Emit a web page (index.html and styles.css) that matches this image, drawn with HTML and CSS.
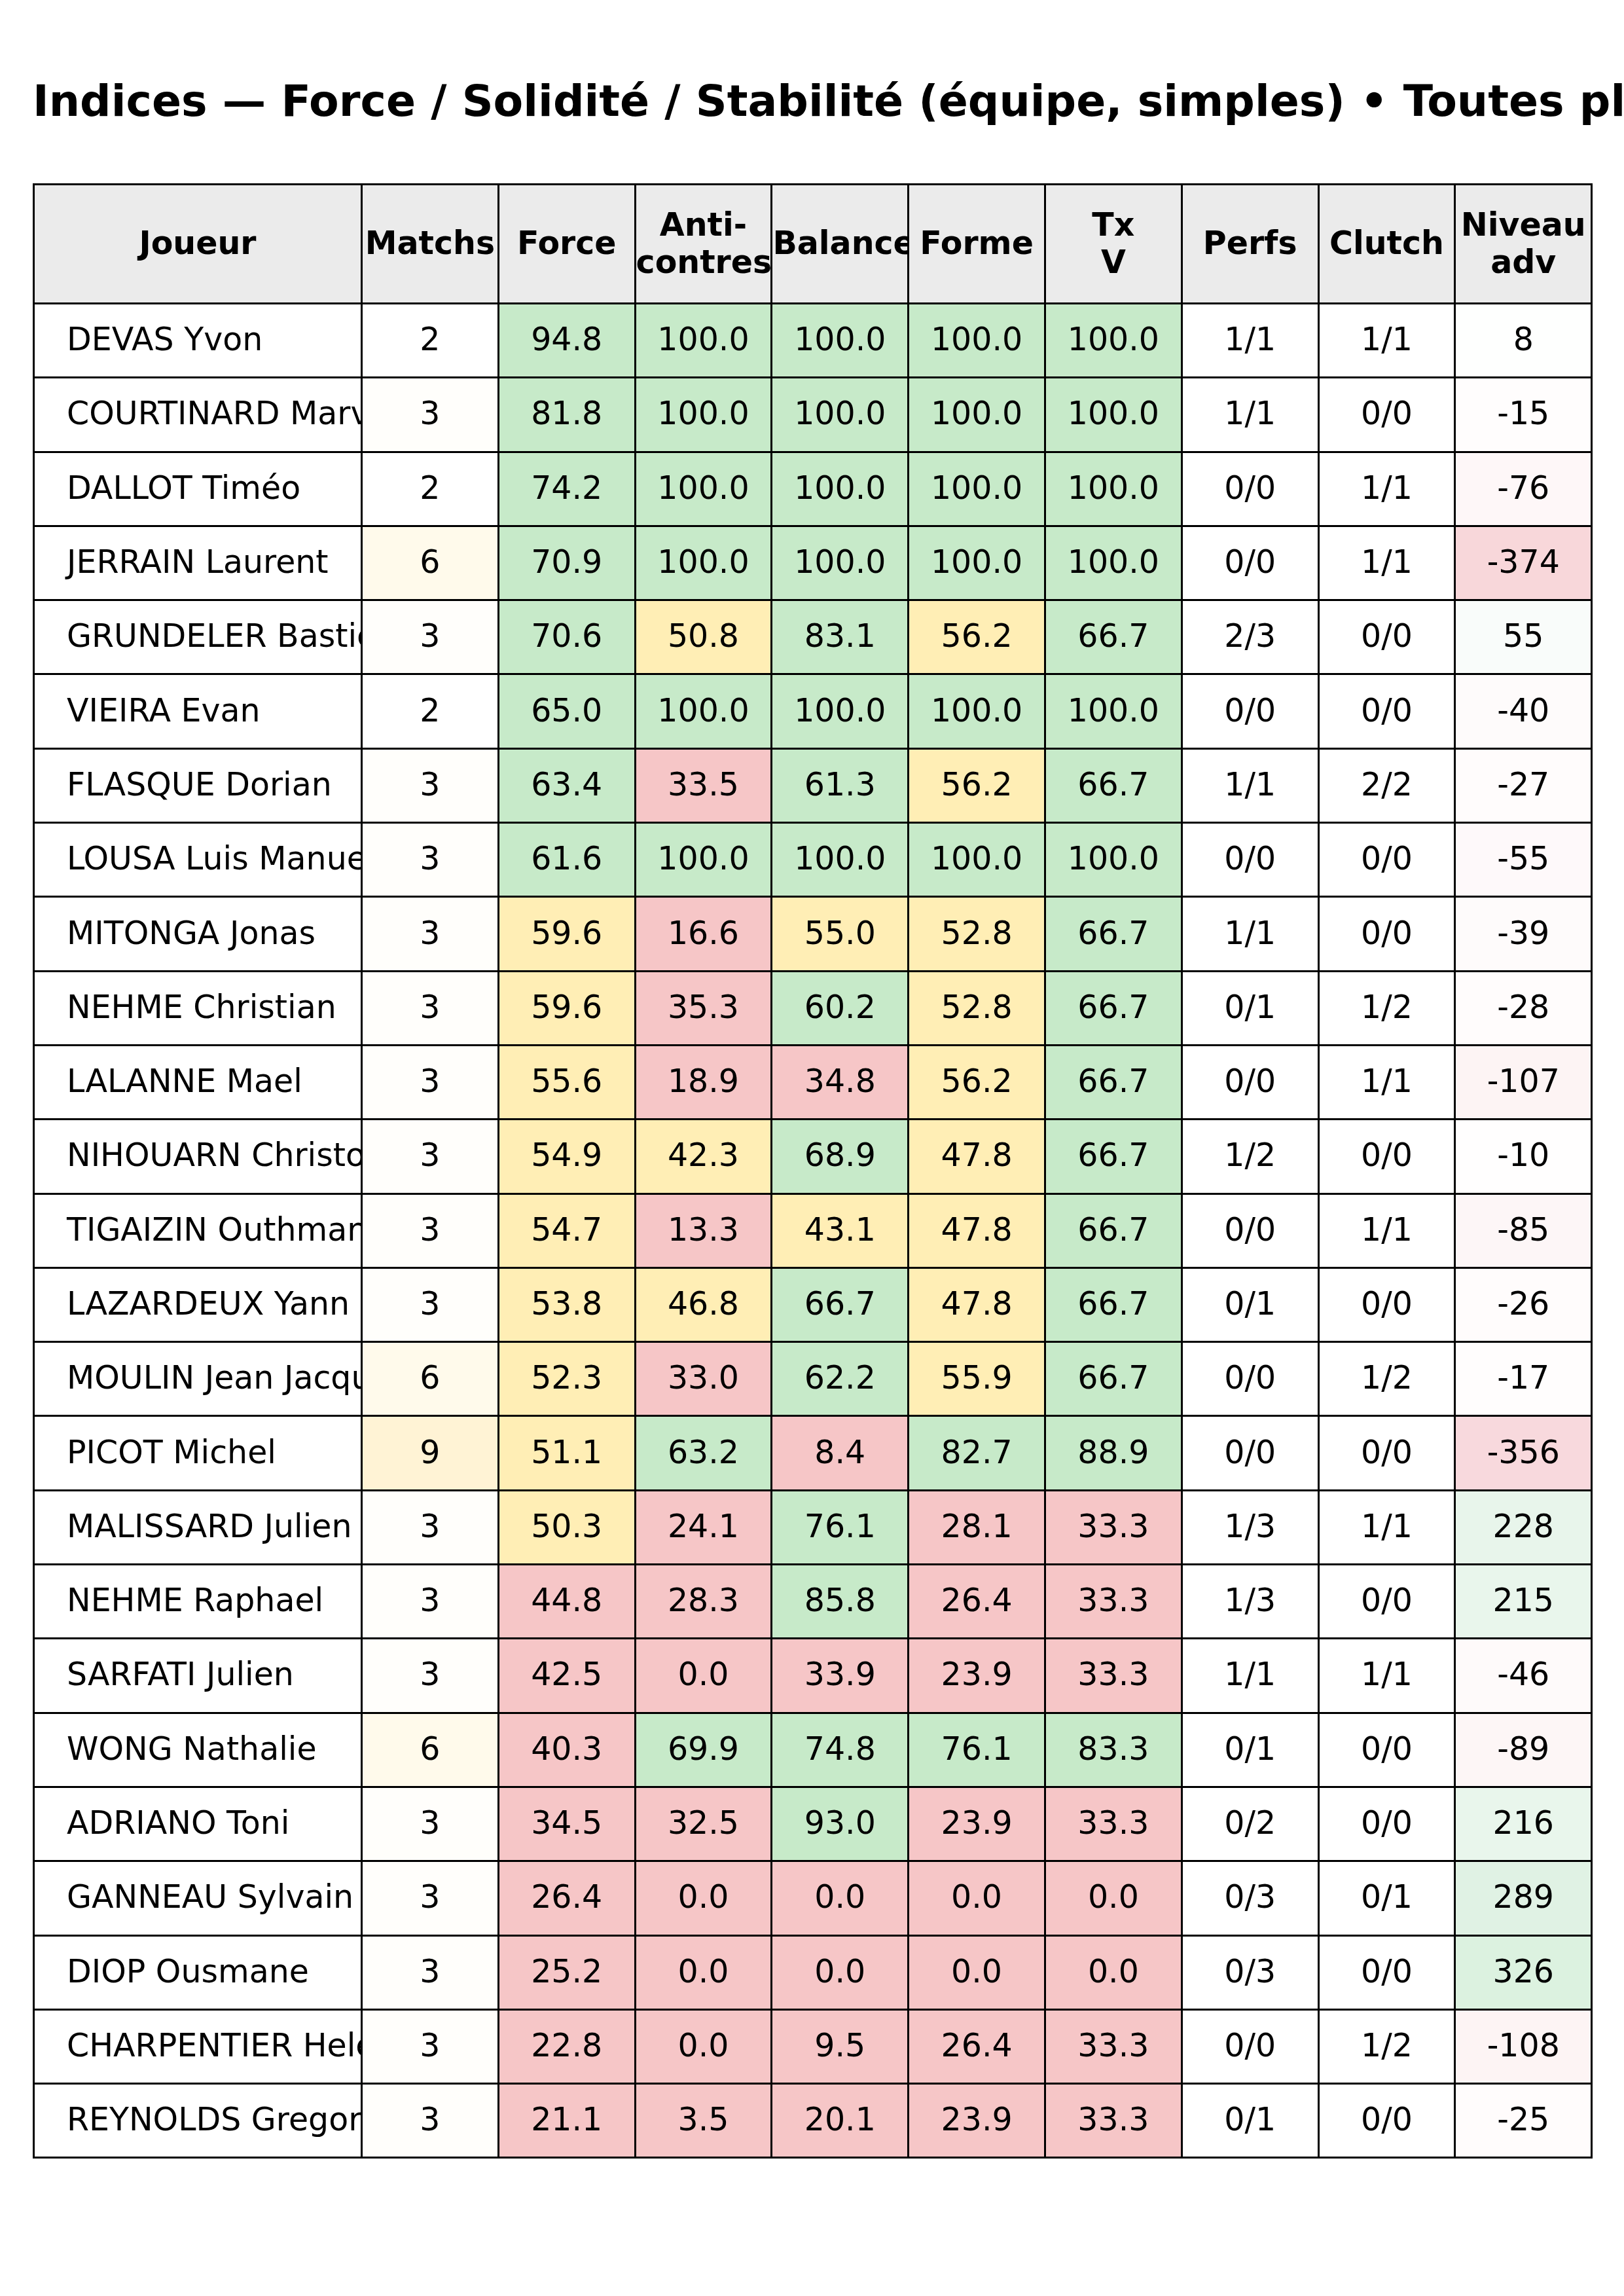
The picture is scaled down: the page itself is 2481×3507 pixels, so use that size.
FILE: index.html
```html
<!DOCTYPE html>
<html lang="fr">
<head>
<meta charset="utf-8">
<title>Indices</title>
<link rel="stylesheet" href="styles.css">
</head>
<body>
<div class="page">
  <h1 class="title">Indices — Force / Solidité / Stabilité (équipe, simples) • Toutes plages</h1>
  <table class="grid">
    <colgroup>
      <col class="c-name"><col class="c-num"><col class="c-num"><col class="c-num"><col class="c-num"><col class="c-num"><col class="c-num"><col class="c-num"><col class="c-num"><col class="c-num">
    </colgroup>
    <thead>
      <tr>
        <th>Joueur</th><th>Matchs</th><th>Force</th><th>Anti-<br>contres</th><th>Balance</th><th>Forme</th><th>Tx<br>V</th><th>Perfs</th><th>Clutch</th><th>Niveau<br>adv</th>
      </tr>
    </thead>
    <tbody>
      <tr><td class="name">DEVAS Yvon</td><td>2</td><td class="g">94.8</td><td class="g">100.0</td><td class="g">100.0</td><td class="g">100.0</td><td class="g">100.0</td><td>1/1</td><td>1/1</td><td style="background:#fefffe">8</td></tr>
      <tr><td class="name">COURTINARD Marvin</td><td style="background:#fffefb">3</td><td class="g">81.8</td><td class="g">100.0</td><td class="g">100.0</td><td class="g">100.0</td><td class="g">100.0</td><td>1/1</td><td>0/0</td><td style="background:#fffdfd">-15</td></tr>
      <tr><td class="name">DALLOT Timéo</td><td>2</td><td class="g">74.2</td><td class="g">100.0</td><td class="g">100.0</td><td class="g">100.0</td><td class="g">100.0</td><td>0/0</td><td>1/1</td><td style="background:#fef7f8">-76</td></tr>
      <tr><td class="name">JERRAIN Laurent</td><td style="background:#fffaeb">6</td><td class="g">70.9</td><td class="g">100.0</td><td class="g">100.0</td><td class="g">100.0</td><td class="g">100.0</td><td>0/0</td><td>1/1</td><td style="background:#f8d7da">-374</td></tr>
      <tr><td class="name">GRUNDELER Bastien</td><td style="background:#fffefb">3</td><td class="g">70.6</td><td class="y">50.8</td><td class="g">83.1</td><td class="y">56.2</td><td class="g">66.7</td><td>2/3</td><td>0/0</td><td style="background:#f9fcfa">55</td></tr>
      <tr><td class="name">VIEIRA Evan</td><td>2</td><td class="g">65.0</td><td class="g">100.0</td><td class="g">100.0</td><td class="g">100.0</td><td class="g">100.0</td><td>0/0</td><td>0/0</td><td style="background:#fefbfb">-40</td></tr>
      <tr><td class="name">FLASQUE Dorian</td><td style="background:#fffefb">3</td><td class="g">63.4</td><td class="r">33.5</td><td class="g">61.3</td><td class="y">56.2</td><td class="g">66.7</td><td>1/1</td><td>2/2</td><td style="background:#fffcfc">-27</td></tr>
      <tr><td class="name">LOUSA Luis Manuel</td><td style="background:#fffefb">3</td><td class="g">61.6</td><td class="g">100.0</td><td class="g">100.0</td><td class="g">100.0</td><td class="g">100.0</td><td>0/0</td><td>0/0</td><td style="background:#fef9fa">-55</td></tr>
      <tr><td class="name">MITONGA Jonas</td><td style="background:#fffefb">3</td><td class="y">59.6</td><td class="r">16.6</td><td class="y">55.0</td><td class="y">52.8</td><td class="g">66.7</td><td>1/1</td><td>0/0</td><td style="background:#fefbfb">-39</td></tr>
      <tr><td class="name">NEHME Christian</td><td style="background:#fffefb">3</td><td class="y">59.6</td><td class="r">35.3</td><td class="g">60.2</td><td class="y">52.8</td><td class="g">66.7</td><td>0/1</td><td>1/2</td><td style="background:#fffcfc">-28</td></tr>
      <tr><td class="name">LALANNE Mael</td><td style="background:#fffefb">3</td><td class="y">55.6</td><td class="r">18.9</td><td class="r">34.8</td><td class="y">56.2</td><td class="g">66.7</td><td>0/0</td><td>1/1</td><td style="background:#fdf4f4">-107</td></tr>
      <tr><td class="name">NIHOUARN Christophe</td><td style="background:#fffefb">3</td><td class="y">54.9</td><td class="y">42.3</td><td class="g">68.9</td><td class="y">47.8</td><td class="g">66.7</td><td>1/2</td><td>0/0</td><td style="background:#fffefe">-10</td></tr>
      <tr><td class="name">TIGAIZIN Outhmane</td><td style="background:#fffefb">3</td><td class="y">54.7</td><td class="r">13.3</td><td class="y">43.1</td><td class="y">47.8</td><td class="g">66.7</td><td>0/0</td><td>1/1</td><td style="background:#fdf6f7">-85</td></tr>
      <tr><td class="name">LAZARDEUX Yann</td><td style="background:#fffefb">3</td><td class="y">53.8</td><td class="y">46.8</td><td class="g">66.7</td><td class="y">47.8</td><td class="g">66.7</td><td>0/1</td><td>0/0</td><td style="background:#fffcfc">-26</td></tr>
      <tr><td class="name">MOULIN Jean Jacques</td><td style="background:#fffaeb">6</td><td class="y">52.3</td><td class="r">33.0</td><td class="g">62.2</td><td class="y">55.9</td><td class="g">66.7</td><td>0/0</td><td>1/2</td><td style="background:#fffdfd">-17</td></tr>
      <tr><td class="name">PICOT Michel</td><td style="background:#fff3d5">9</td><td class="y">51.1</td><td class="g">63.2</td><td class="r">8.4</td><td class="g">82.7</td><td class="g">88.9</td><td>0/0</td><td>0/0</td><td style="background:#f8d9dd">-356</td></tr>
      <tr><td class="name">MALISSARD Julien</td><td style="background:#fffefb">3</td><td class="y">50.3</td><td class="r">24.1</td><td class="g">76.1</td><td class="r">28.1</td><td class="r">33.3</td><td>1/3</td><td>1/1</td><td style="background:#e8f5eb">228</td></tr>
      <tr><td class="name">NEHME Raphael</td><td style="background:#fffefb">3</td><td class="r">44.8</td><td class="r">28.3</td><td class="g">85.8</td><td class="r">26.4</td><td class="r">33.3</td><td>1/3</td><td>0/0</td><td style="background:#e9f6ec">215</td></tr>
      <tr><td class="name">SARFATI Julien</td><td style="background:#fffefb">3</td><td class="r">42.5</td><td class="r">0.0</td><td class="r">33.9</td><td class="r">23.9</td><td class="r">33.3</td><td>1/1</td><td>1/1</td><td style="background:#fefafa">-46</td></tr>
      <tr><td class="name">WONG Nathalie</td><td style="background:#fffaeb">6</td><td class="r">40.3</td><td class="g">69.9</td><td class="g">74.8</td><td class="g">76.1</td><td class="g">83.3</td><td>0/1</td><td>0/0</td><td style="background:#fdf6f6">-89</td></tr>
      <tr><td class="name">ADRIANO Toni</td><td style="background:#fffefb">3</td><td class="r">34.5</td><td class="r">32.5</td><td class="g">93.0</td><td class="r">23.9</td><td class="r">33.3</td><td>0/2</td><td>0/0</td><td style="background:#e9f6ec">216</td></tr>
      <tr><td class="name">GANNEAU Sylvain</td><td style="background:#fffefb">3</td><td class="r">26.4</td><td class="r">0.0</td><td class="r">0.0</td><td class="r">0.0</td><td class="r">0.0</td><td>0/3</td><td>0/1</td><td style="background:#e0f2e4">289</td></tr>
      <tr><td class="name">DIOP Ousmane</td><td style="background:#fffefb">3</td><td class="r">25.2</td><td class="r">0.0</td><td class="r">0.0</td><td class="r">0.0</td><td class="r">0.0</td><td>0/3</td><td>0/0</td><td style="background:#dcf2e0">326</td></tr>
      <tr><td class="name">CHARPENTIER Helene</td><td style="background:#fffefb">3</td><td class="r">22.8</td><td class="r">0.0</td><td class="r">9.5</td><td class="r">26.4</td><td class="r">33.3</td><td>0/0</td><td>1/2</td><td style="background:#fdf4f4">-108</td></tr>
      <tr><td class="name">REYNOLDS Gregory</td><td style="background:#fffefb">3</td><td class="r">21.1</td><td class="r">3.5</td><td class="r">20.1</td><td class="r">23.9</td><td class="r">33.3</td><td>0/1</td><td>0/0</td><td style="background:#fffcfc">-25</td></tr>
    </tbody>
  </table>
</div>
</body>
</html>
```

FILE: styles.css
```css
html, body {
  margin: 0;
  padding: 0;
  background: #ffffff;
}

.page {
  width: 2481px;
  height: 3507px;
  overflow: hidden;
  font-family: "DejaVu Sans", "Liberation Sans", sans-serif;
  color: #000000;
}

.title {
  margin: 0;
  padding: 121px 0 0 50px;
  font-size: 66.5px;
  line-height: 66px;
  font-weight: bold;
  white-space: nowrap;
}

.grid {
  margin: 93px 0 0 50px;
  width: 2380px;
  table-layout: fixed;
  border-collapse: collapse;
  font-size: 49px;
}

.c-name { width: 501px; }
.c-num { width: 208.8px; }

.grid th,
.grid td {
  border: 3px solid #000000;
  padding: 0;
  text-align: center;
  vertical-align: middle;
  white-space: nowrap;
  overflow: hidden;
  background: #ffffff;
}

.grid thead tr { height: 182px; }
.grid tbody tr { height: 113.3px; }

.grid th {
  background: #ebebeb;
  font-weight: bold;
  line-height: 1.15;
}

.grid td {
  padding-bottom: 3px;
}

.grid td.name {
  text-align: left;
  padding-left: 49px;
}

.grid td.g { background: #c7eac9; }
.grid td.y { background: #ffeeb5; }
.grid td.r { background: #f6c6c7; }
```
